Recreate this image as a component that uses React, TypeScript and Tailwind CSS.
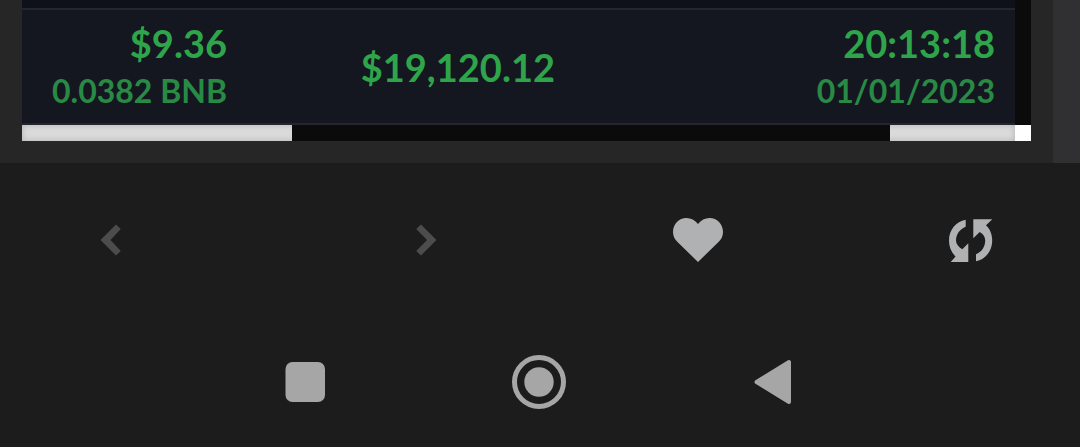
import React from 'react';

interface Trade {
  value: string;
  amount: string;
  total: string;
  time: string;
  date: string;
}

const trades: Trade[] = [
  { value: '$9.36', amount: '0.0382 BNB', total: '$19,120.12', time: '20:13:18', date: '01/01/2023' },
];

const TradeTable: React.FC = () => (
  <table className="w-full table-fixed border-collapse text-right text-[38px] font-bold leading-12 text-[#2ea54a]">
    <tbody>
      {trades.map((trade) => (
        <tr key={trade.time} className="h-[115px] border-y-2 border-[#25262d] bg-[#151720]">
          <td className="w-[225px] pr-5">
            <div>{trade.value}</div>
            <div className="text-[32px] text-[#298a45]">{trade.amount}</div>
          </td>
          <td className="w-[328px] pr-5">{trade.total}</td>
          <td className="pr-5">
            <div>{trade.time}</div>
            <div className="text-[32px] text-[#298a45]">{trade.date}</div>
          </td>
        </tr>
      ))}
    </tbody>
  </table>
);

const BrowserToolbar: React.FC = () => (
  <nav className="grid h-[154px] grid-cols-[315fr_272fr_273fr_60px] items-center pl-[81px] pr-[79px]">
    <button type="button" aria-label="Back" className="size-15 text-[#4c4c4c]">
      <svg viewBox="0 0 60 60" fill="currentColor">
        <path d="M35 14.5 39.8 19 29.5 30 39.8 41 35 45.5 19.5 30Z" />
      </svg>
    </button>
    <button type="button" aria-label="Forward" className="size-15 text-[#4c4c4c]">
      <svg viewBox="0 0 60 60" fill="currentColor">
        <path d="M25 14.5 20.2 19 31 30 20.2 41 25 45.5 40.5 30Z" />
      </svg>
    </button>
    <button type="button" aria-label="Favourite" className="size-15 text-[#b0b1b3]">
      <svg viewBox="0 0 60 60" fill="currentColor">
        <path d="M30 52 9.5 32C6.5 29 5 26 5 22 5 14 11 8 18.5 8 23 8 27 10 30 14 33 10 37 8 41.5 8 49 8 55 14 55 22 55 26 53.5 29 50.5 32Z" />
      </svg>
    </button>
    <button type="button" aria-label="Reload" className="size-15 text-[#b0b1b3]">
      <svg viewBox="0 0 60 60" fill="currentColor">
        <path d="M24.7 9.8V16.7C19 19 15 24 15 30.5 15 34 17.5 37 21.3 39.3L27.3 33.3V52H9.7L14.5 46.5C10 42 8 36.5 8 30.5 8 20 15 11.5 24.7 9.8Z" />
        <path d="M32.3 9.3H51.3L45 15.3C49 19 51.2 24.5 51.2 30.5 51.2 41 44.5 49.5 35 51.2V44.3C40.5 42 44.2 37 44.2 30.5 44.2 27 42.5 24 38.7 22L32.3 28.3Z" />
      </svg>
    </button>
  </nav>
);

const SystemBar: React.FC = () => (
  <nav className="flex h-[130px] items-center justify-center gap-[174px] pr-0.5 text-[#a6a6a6]">
    <button type="button" aria-label="Recent apps" className="size-15">
      <svg viewBox="0 0 60 60" fill="currentColor">
        <rect x="10.5" y="10" width="39.5" height="40" rx="7" />
      </svg>
    </button>
    <button type="button" aria-label="Home" className="size-15">
      <svg viewBox="0 0 60 60" fill="currentColor">
        <circle cx="30" cy="30" r="24.5" fill="none" stroke="currentColor" strokeWidth="5" />
        <circle cx="30" cy="30" r="14.7" />
      </svg>
    </button>
    <button type="button" aria-label="Return" className="size-15">
      <svg viewBox="0 0 60 60" fill="currentColor" stroke="currentColor" strokeWidth="4" strokeLinejoin="round">
        <path d="M46 10V50L13.5 30Z" />
      </svg>
    </button>
  </nav>
);

const App: React.FC = () => {
  return (
    <div className="min-h-screen bg-[#1c1c1c] font-['Lato',sans-serif]">
      <main className="flex bg-[#262626]">
        <section className="ml-[22px] mb-[22px] flex-1">
          <div className="flex">
            <div className="min-w-0 flex-1 bg-[#0e101a] pt-2">
              <TradeTable />
            </div>
            {/* Vertical scrollbar */}
            <div className="w-4 bg-[#0b0b0b]" />
          </div>
          {/* Horizontal scrollbar with corner */}
          <div className="flex h-4 bg-white">
            <div className="flex flex-1 bg-[#dadada] shadow-[inset_0_0_6px_rgba(0,0,0,0.18)]">
              <div className="ml-[270px] mr-[125px] flex-1 bg-[#0b0b0b]" />
            </div>
            <div className="w-4" />
          </div>
        </section>
        <div className="ml-[22px] w-[27px] bg-[#303032]" />
      </main>
      <BrowserToolbar />
      <SystemBar />
    </div>
  );
};

export default App;
